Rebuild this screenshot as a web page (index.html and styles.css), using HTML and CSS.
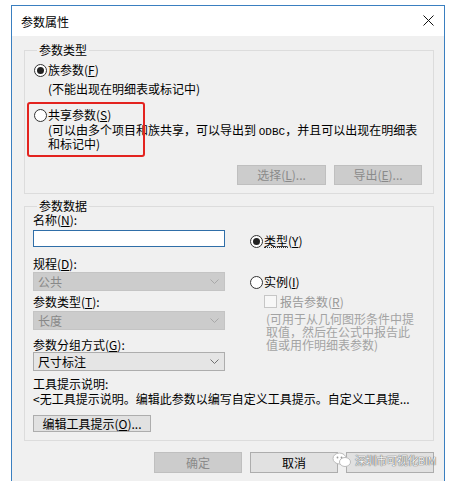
FILE: index.html
```html
<!DOCTYPE html>
<html lang="zh-CN">
<head>
  <meta charset="UTF-8" />
  <title>参数属性</title>
  <link rel="stylesheet" href="styles.css">
</head>
<body>

  <div class="dialog">
    <div class="titlebar">
      <span class="title">参数属性</span>
      <svg class="close" width="11" height="11" viewBox="0 0 11 11">
        <path d="M0.5 0.5 L10.5 10.5 M10.5 0.5 L0.5 10.5" stroke="#111" stroke-width="1" fill="none"/>
      </svg>
    </div>

    <div class="content">
      <fieldset class="group group-type">
        <legend>参数类型</legend>
        <div class="option"><span class="radio checked"></span>族参数(<u>F</u>)</div>
        <div class="note">(不能出现在明细表或标记中)</div>
        <div class="option option-shared"><span class="radio"></span>共享参数(<u>S</u>)</div>
        <div class="note note-multi">(可以由多个项目和族共享，可以导出到 <span class="mono">ODBC</span>，并且可以出现在明细表<br>和标记中)</div>
        <div class="actions">
          <button class="btn disabled">选择(<u>L</u>)...</button>
          <button class="btn disabled">导出(<u>E</u>)...</button>
        </div>
      </fieldset>

      <div class="highlight"></div>

      <fieldset class="group group-data">
        <legend>参数数据</legend>
        <div class="columns">
          <div class="col-left">
            <div class="label">名称(<u>N</u>):</div>
            <div class="text-input"></div>
            <div class="label gap-a">规程(<u>D</u>):</div>
            <div class="select disabled gap-b">
              <span>公共</span>
              <svg width="9" height="5" viewBox="0 0 9 5"><polyline points="0.5,0.5 4.5,4.5 8.5,0.5" fill="none" stroke="#a8a8a8"/></svg>
            </div>
            <div class="label gap-c">参数类型(<u>T</u>):</div>
            <div class="select disabled gap-d">
              <span>长度</span>
              <svg width="9" height="5" viewBox="0 0 9 5"><polyline points="0.5,0.5 4.5,4.5 8.5,0.5" fill="none" stroke="#a8a8a8"/></svg>
            </div>
            <div class="label gap-e">参数分组方式(<u>G</u>):</div>
            <div class="select">
              <span>尺寸标注</span>
              <svg width="9" height="5" viewBox="0 0 9 5"><polyline points="0.5,0.5 4.5,4.5 8.5,0.5" fill="none" stroke="#707070"/></svg>
            </div>
          </div>
          <div class="col-right">
            <div class="option opt-type"><span class="radio checked"></span><span class="focus">类型</span>(<u>Y</u>)</div>
            <div class="option opt-inst"><span class="radio"></span>实例(<u>I</u>)</div>
            <div class="check-row"><span class="checkbox"></span>报告参数(<u>R</u>)</div>
            <div class="hint">(可用于从几何图形条件中提<br>取值，然后在公式中报告此<br>值或用作明细表参数)</div>
          </div>
        </div>
        <div class="label tip-label">工具提示说明:</div>
        <div class="tip-text">&lt;无工具提示说明。编辑此参数以编写自定义工具提示。自定义工具提...</div>
        <button class="btn btn-edit">编辑工具提示(<u>O</u>)...</button>
      </fieldset>

      <div class="footer">
        <button class="btn btn-lg disabled">确定</button>
        <button class="btn btn-lg">取消</button>
        <button class="btn btn-lg" aria-label="帮助"></button>
      </div>

      <div class="watermark">
        <svg width="20" height="16" viewBox="0 0 20 16">
          <ellipse cx="7.5" cy="6.5" rx="6.5" ry="5.5" fill="#fff" stroke="#bbb"/>
          <ellipse cx="13" cy="10" rx="5.5" ry="4.5" fill="#fff" stroke="#bbb"/>
          <circle cx="5.5" cy="5.5" r="0.9" fill="#999"/>
          <circle cx="9.5" cy="5.5" r="0.9" fill="#999"/>
        </svg>
        <span>深圳市可视化BIM</span>
      </div>
    </div>
  </div>

</body>
</html>
```

FILE: styles.css
```css
body {
  margin: 0;
  background: #fff;
  font-family: "Noto Sans CJK SC", "Liberation Sans", sans-serif;
  font-size: 12px;
  color: #000;
}

u {
  text-decoration-thickness: 1px;
  text-underline-offset: 1px;
}

.dialog {
  margin: 5px 0 0 11px;
  width: 432px;
  height: 480px;
  border: 1px solid #3a7fc0;
  border-bottom: none;
  background: #f0f0f0;
}

.titlebar {
  height: 30px;
  background: #fff;
  display: flex;
  align-items: center;
  justify-content: space-between;
  padding: 0 10px 0 9px;
}

.title {
  line-height: 14px;
  margin-top: 2px;
}

.close {
  display: block;
  margin-top: -1px;
}

.content {
  position: relative;
  padding-top: 7px;
}

.group {
  margin: 0 10px 0 12px;
  border: 1px solid #dcdcdc;
  padding: 0 11px 8px 8px;
  min-width: 0;
}

.group legend {
  padding: 0 2px;
  margin-left: 4px;
  line-height: 14px;
}

.group-type {
  padding-top: 5px;
}

.group-data {
  margin-top: 5px;
  padding-top: 0;
}

.option {
  display: flex;
  align-items: center;
  height: 16px;
  line-height: 16px;
  padding-left: 1px;
}

.radio {
  width: 11px;
  height: 11px;
  border: 1px solid #333;
  border-radius: 50%;
  background: #fff;
  margin-right: 1px;
  display: flex;
  align-items: center;
  justify-content: center;
  flex-shrink: 0;
}

.radio.checked::after {
  content: "";
  width: 7px;
  height: 7px;
  border-radius: 50%;
  background: #222;
}

.note {
  padding-left: 15px;
  margin-top: 3px;
  line-height: 16px;
}

.option-shared {
  margin-top: 10px;
}

.note-multi {
  margin-top: 1px;
  line-height: 12px;
  white-space: nowrap;
}

.mono {
  font-family: "Liberation Mono", monospace;
  font-size: 11px;
}

.actions {
  display: flex;
  justify-content: flex-end;
  gap: 8px;
  margin-top: 15px;
}

.btn {
  font-family: inherit;
  font-size: 12px;
  height: 20px;
  width: 88px;
  padding: 0;
  border: 1px solid #adadad;
  background: #e1e1e1;
  color: #000;
  line-height: 18px;
}

.btn.disabled {
  background: #cccccc;
  border-color: #bfbfbf;
  color: #8a8a8a;
}

.actions .btn:first-child {
  width: 89px;
}

.highlight {
  position: absolute;
  left: 15px;
  top: 66px;
  width: 114px;
  height: 51px;
  border: 2px solid #e3231f;
  border-radius: 3px;
}

.columns {
  display: flex;
  gap: 24px;
}

.col-left {
  width: 192px;
}

.label {
  line-height: 14px;
  height: 14px;
}

.text-input {
  margin-top: 3px;
  height: 15px;
  border: 1px solid #2f6ea8;
  background: #fff;
}

.gap-a { margin-top: 10px; }
.gap-b { margin-top: 1px; }
.gap-c { margin-top: 4px; }
.gap-d { margin-top: 2px; }
.gap-e { margin-top: 8px; }

.select {
  height: 17px;
  border: 1px solid #adadad;
  background: #e5e5e5;
  display: flex;
  align-items: center;
  justify-content: space-between;
  padding: 0 5px 0 4px;
  line-height: 17px;
}

.select.disabled {
  background: #cccccc;
  border-color: #c4c4c4;
  color: #888;
}

.col-right {
  flex: 1;
}

.opt-type {
  margin-top: 20px;
}

.focus {
  border-bottom: 1px dotted #333;
  line-height: 13px;
}

.opt-inst {
  margin-top: 25px;
}

.check-row {
  display: flex;
  align-items: center;
  height: 16px;
  margin-top: 3px;
  padding-left: 15px;
  color: #999;
}

.checkbox {
  width: 11px;
  height: 11px;
  border: 1px solid #c6c6c6;
  background: #f7f7f7;
  margin-right: 3px;
}

.hint {
  margin-top: 3px;
  padding-left: 17px;
  line-height: 13px;
  color: #a3a3a3;
}

.tip-label {
  margin-top: 6px;
}

.tip-text {
  margin-top: 1px;
  line-height: 14px;
  white-space: nowrap;
}

.btn-edit {
  display: block;
  margin-top: 9px;
  width: 118px;
  height: 17px;
  line-height: 15px;
}

.footer {
  display: flex;
  justify-content: flex-end;
  gap: 8px;
  margin-top: 11px;
  padding-right: 10px;
}

.btn-lg {
  height: 21px;
  line-height: 19px;
}

.watermark {
  position: absolute;
  left: 320px;
  top: 416px;
  display: flex;
  align-items: center;
  gap: 3px;
}

.watermark span {
  color: #f4f4f4;
  font-size: 11px;
  letter-spacing: -0.5px;
  text-shadow: 0 0 1px #555, 0 0 1px #555;
}
```
